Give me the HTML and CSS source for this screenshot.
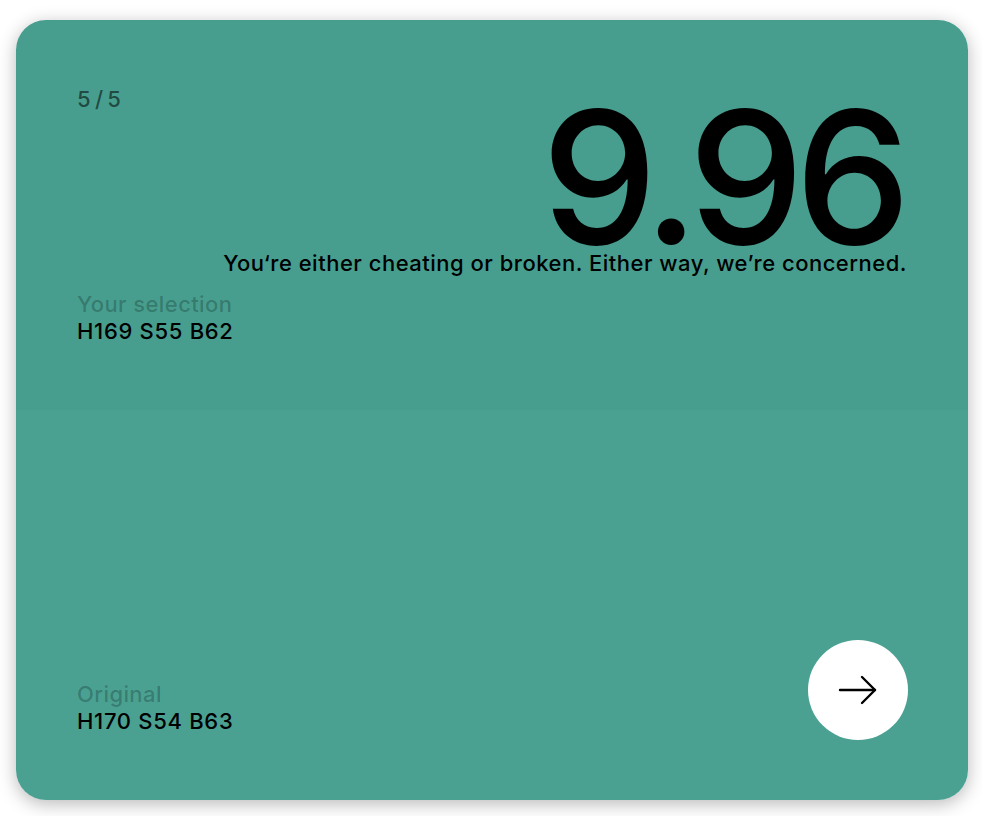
FILE: index.html
```html
<!DOCTYPE html>
<html lang="en">
<head>
    <meta charset="UTF-8">
    <meta name="viewport" content="width=device-width, initial-scale=1.0">
    <title>Result</title>
    <link rel="stylesheet" href="styles.css">
</head>
<body>
    <div class="card">
        <div class="half half-top">
            <div class="head">
                <div class="counter">5<span class="slash">/</span>5</div>
                <div class="score">
                    <div class="score-value">9.96</div>
                    <div class="score-text">You&#8216;re either cheating or broken. Either way, we&#8217;re concerned.</div>
                </div>
            </div>
            <div class="color-info">
                <div class="label">Your selection</div>
                <div class="value">H169 S55 B62</div>
            </div>
        </div>
        <div class="half half-bottom">
            <div class="color-info">
                <div class="label">Original</div>
                <div class="value">H170 S54 B63</div>
            </div>
            <button class="next-btn" aria-label="Next">
                <svg width="40" height="40" viewBox="0 0 40 40" fill="none" stroke="#000" stroke-width="2.4" stroke-linecap="round" stroke-linejoin="round">
                    <path d="M2 20 H37"/>
                    <path d="M24 7 L37 20 L24 33"/>
                </svg>
            </button>
        </div>
    </div>
</body>
</html>
```

FILE: styles.css
```css
body {
    margin: 0;
    padding: 20px 14px 16px 16px;
    background: #fff;
    font-family: Inter, "Noto Sans", sans-serif;
    color: #000;
}

.card {
    display: flex;
    flex-direction: column;
    height: 780px;
    border-radius: 30px;
    overflow: hidden;
    box-shadow: 0 4px 18px rgba(0, 0, 0, 0.28);
}

.half {
    box-sizing: border-box;
    height: 390px;
    display: flex;
    padding: 60px 61px 60px 61px;
}

.half-top {
    background: #479e8e;
    flex-direction: column;
    justify-content: space-between;
    padding-bottom: 65px;
}

.half-bottom {
    background: #4aa192;
    align-items: flex-end;
    justify-content: space-between;
}

.head {
    display: flex;
    justify-content: space-between;
    align-items: flex-start;
}

.counter {
    font-size: 22px;
    line-height: 24px;
    margin-top: 7px;
    font-weight: 500;
    letter-spacing: 0.3px;
    color: rgba(0, 0, 0, 0.55);
}

.slash {
    margin: 0 4px;
}

.score {
    text-align: right;
    margin-top: 23px;
    margin-right: -2px;
}

.score-value {
    font-size: 184px;
    font-weight: 500;
    line-height: 148px;
    letter-spacing: -0.05em;
    margin-right: 0.04em;
}

.score-text {
    font-size: 22px;
    font-weight: 500;
    line-height: 24px;
    letter-spacing: 0.5px;
    margin-right: 2px;
}

.color-info {
    font-size: 22px;
    font-weight: 500;
    line-height: 27px;
    letter-spacing: 0.4px;
}

.value {
    letter-spacing: 0.7px;
}

.half-bottom .color-info {
    margin-bottom: 5px;
}

.label {
    color: rgba(0, 0, 0, 0.24);
}

.next-btn {
    width: 100px;
    height: 100px;
    border: none;
    border-radius: 50%;
    background: #fff;
    display: flex;
    align-items: center;
    justify-content: center;
    padding: 0;
    margin-right: -1px;
    cursor: pointer;
}
```
